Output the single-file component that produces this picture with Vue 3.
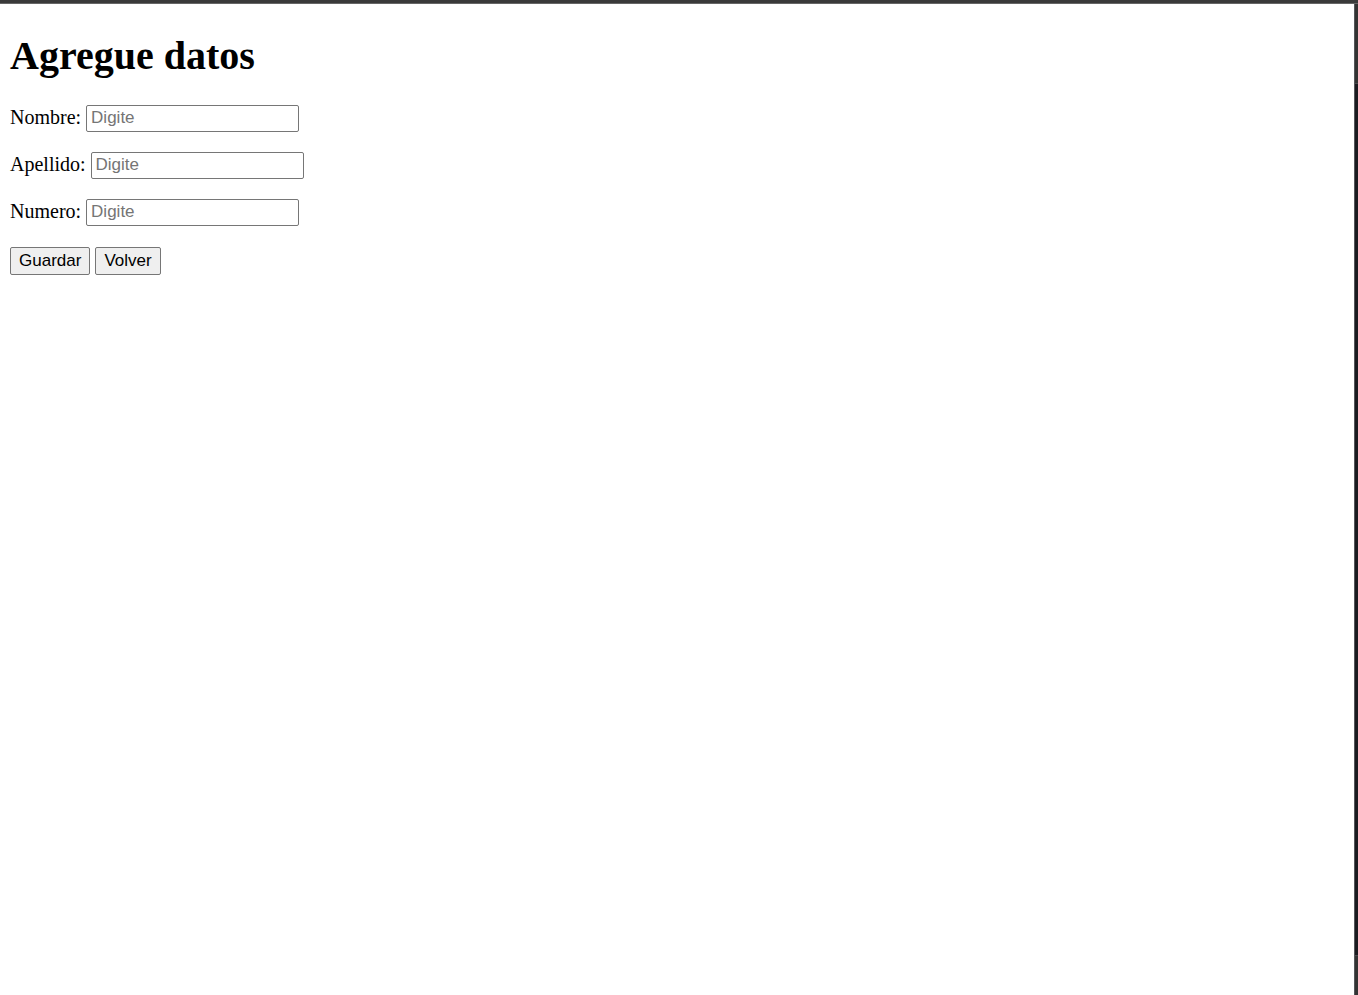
<script setup>
import { reactive } from 'vue'

const fields = [
  { id: 'nombre', label: 'Nombre:' },
  { id: 'apellido', label: 'Apellido:' },
  { id: 'numero', label: 'Numero:' },
]
const values = reactive({ nombre: '', apellido: '', numero: '' })
</script>

<template>
  <div class="window">
    <div class="top-edge"></div>
    <main class="page">
      <h1>Agregue datos</h1>
      <form class="form" @submit.prevent>
        <div v-for="field in fields" :key="field.id" class="row">
          <label :for="field.id">{{ field.label }}</label>
          <input :id="field.id" v-model="values[field.id]" type="text" placeholder="Digite" />
        </div>
        <div class="row actions">
          <button type="submit">Guardar</button>
          <button type="button">Volver</button>
        </div>
      </form>
    </main>
    <div class="side-edge">
      <div class="side-cap side-cap-top"></div>
      <div class="side-track"></div>
      <div class="side-cap side-cap-bottom"></div>
    </div>
  </div>
</template>

<style>
body {
  background: #fff;
}
</style>

<style scoped>
.window {
  display: grid;
  grid-template-columns: 1fr 4px;
  grid-template-rows: 4px 1fr;
  min-height: 100vh;
  color: #000;
  font-family: "Liberation Serif", "Times New Roman", serif;
  font-size: 20px;
}

.top-edge {
  grid-column: 1 / -1;
  box-sizing: border-box;
  background: #3a3a3a;
  border-bottom: 1px solid #666;
}

.page {
  padding: 28px 10px;
}

h1 {
  margin: 0 0 25px;
  font-size: 40px;
  line-height: 48px;
  font-weight: bold;
}

.form {
  display: flex;
  flex-direction: column;
  gap: 20px;
}

.row {
  display: flex;
  align-items: flex-start;
  gap: 5px;
}

label {
  line-height: 24px;
}

input,
button {
  box-sizing: border-box;
  height: 27px;
  margin: 0;
  border: 1px solid #767676;
  border-radius: 2px;
  font-family: "Liberation Sans", Arial, sans-serif;
  font-size: 17px;
  line-height: 20px;
}

input {
  width: 213px;
  padding: 0 4px 2px;
  background: #fff;
  color: #000;
}

input::placeholder {
  color: #757575;
  opacity: 1;
}

.actions {
  padding-top: 1px;
}

button {
  height: 28px;
  padding: 0 8px;
  background: #efefef;
  color: #000;
}

.side-edge {
  display: flex;
  flex-direction: column;
  box-sizing: border-box;
  border-left: 1px solid #55565a;
}

.side-cap {
  box-sizing: border-box;
  background: #333;
}

.side-cap-top {
  height: 80px;
  border-bottom: 1px solid #4a4a4d;
}

.side-track {
  flex: 1;
  background: #1b1b20;
}

.side-cap-bottom {
  height: 40px;
  border-top: 1px solid #4a4a4d;
}
</style>
